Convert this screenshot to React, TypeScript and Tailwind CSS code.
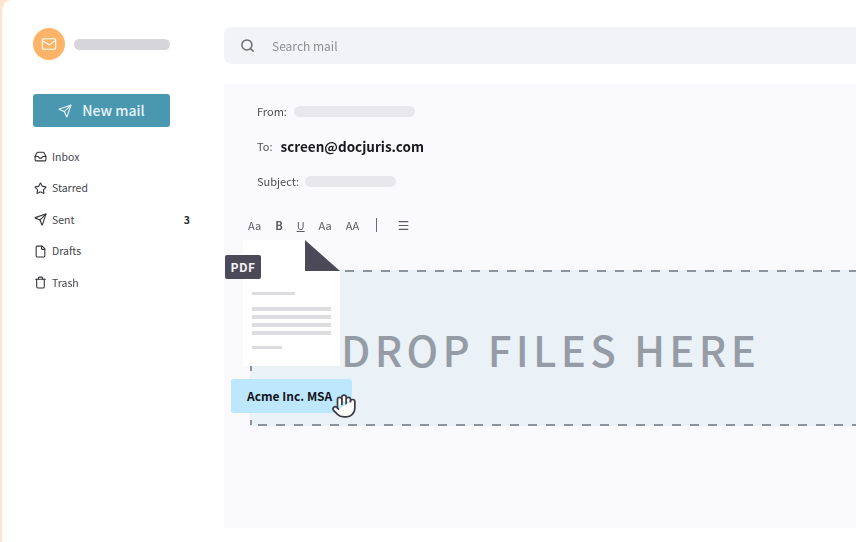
import { File, Hand, Inbox, Mail, Menu, Search, Send, Star, Trash } from "lucide-react";

const navItems = [
  { label: "Inbox", icon: Inbox },
  { label: "Starred", icon: Star },
  { label: "Sent", icon: Send, count: "3" },
  { label: "Drafts", icon: File },
  { label: "Trash", icon: Trash },
];

function Sidebar() {
  return (
    <aside className="w-[222px] shrink-0 pl-[31px] pt-[28px]">
      <div className="flex items-center gap-[9px]">
        <div className="flex h-[32px] w-[32px] items-center justify-center rounded-full bg-[#fdb468]">
          <Mail className="h-[16px] w-[16px] text-white" strokeWidth={1.6} />
        </div>
        <div className="h-[11px] w-[96px] rounded-full bg-[#d6d5da]" />
      </div>
      <button className="mt-[34px] flex h-[33px] w-[137px] items-center justify-center gap-[10px] rounded-[3px] bg-[#4a97b0] text-[14px] font-medium text-[#e6f3f7]">
        <Send className="h-[14px] w-[14px]" strokeWidth={2} />
        New mail
      </button>
      <nav className="mt-[14px] w-[157px]">
        {navItems.map((item) => (
          <div key={item.label} className="flex h-[31.5px] items-center text-[10.5px] text-[#44444c]">
            <item.icon className="ml-[1px] h-[13px] w-[13px] text-[#33333b]" strokeWidth={2} />
            <span className="ml-[5px]">{item.label}</span>
            {item.count && <span className="ml-auto font-bold text-[#2a2a30]">{item.count}</span>}
          </div>
        ))}
      </nav>
    </aside>
  );
}

function DocFile() {
  return (
    <svg className="absolute left-[243px] top-[240px]" width="98" height="127" viewBox="0 0 98 127">
      <path d="M0 0H62L97 31V126H0Z" fill="#ffffff" />
      <path d="M62 0L97 31H62Z" fill="#4c4a59" />
      <g fill="#dcdce1">
        <rect x="9" y="52" width="43" height="3" />
        <rect x="9" y="67" width="79" height="4" />
        <rect x="9" y="75" width="79" height="4" />
        <rect x="9" y="83" width="79" height="4" />
        <rect x="9" y="91" width="79" height="4" />
        <rect x="9" y="106" width="30" height="3" />
      </g>
    </svg>
  );
}

function DropZone() {
  return (
    <div className="relative ml-[26px] mt-[36px] flex h-[156px] items-center bg-[#eaf2f8]">
      <div className="absolute inset-x-0 top-0 h-[2px] bg-[repeating-linear-gradient(90deg,transparent_0_5px,#8d9199_5px_14px,transparent_14px_18px)]" />
      <div className="absolute inset-x-0 bottom-0 h-[2px] bg-[repeating-linear-gradient(90deg,transparent_0_8px,#8d9199_8px_17px,transparent_17px_18px)]" />
      <div className="absolute bottom-0 left-0 top-0 w-[2px] bg-[repeating-linear-gradient(180deg,transparent_0_6px,#8d9199_6px_11px,transparent_11px_18px)]" />
      <span className="ml-[91px] mt-[2px] text-[42px] font-medium leading-none tracking-[4.3px] text-[#969ca5]">DROP FILES HERE</span>
    </div>
  );
}

export default function App() {
  return (
    <div className="relative flex h-[542px] w-[856px] overflow-hidden bg-[#ffa864]/30 pl-[2px] font-['Noto_Sans_CJK_JP','Liberation_Sans',sans-serif] blur-[0.3px]">
      <div className="flex min-w-0 flex-1 rounded-tl-[10px] bg-white">
        <Sidebar />
        <main className="min-w-0 flex-1 pt-[27px]">
          <div className="flex h-[37px] items-center rounded-l-[8px] bg-[#f2f3f7] pl-[16px] text-[12px] text-[#8d8d96]">
            <Search className="h-[15px] w-[15px] text-[#6c6c74]" strokeWidth={2.4} />
            <span className="ml-[17px]">Search mail</span>
          </div>
          <section className="mt-[20px] h-[444px] bg-[#faf9fc] pt-[10px]">
            <div className="flex h-[35px] items-center pl-[33px] text-[11px] text-[#4d4d55]">
              From:
              <div className="ml-[7px] h-[11px] w-[121px] rounded-full bg-[#e8e8ec]" />
            </div>
            <div className="flex h-[35px] items-center pl-[33px] text-[11px] text-[#4d4d55]">
              To:
              <span className="ml-[8px] text-[13.5px] font-bold text-[#17171c]">screen@docjuris.com</span>
            </div>
            <div className="flex h-[35px] items-center pl-[33px] text-[11px] text-[#4d4d55]">
              Subject:
              <div className="ml-[6px] h-[11px] w-[91px] rounded-full bg-[#e8e8ec]" />
            </div>
            <div className="mt-[17px] flex h-[18px] items-center pl-[24px] text-[11px] text-[#5c5c64]">
              <span>Aa</span>
              <span className="ml-[14px] font-bold">B</span>
              <span className="ml-[14px] underline">U</span>
              <span className="ml-[14px]">Aa</span>
              <span className="ml-[14px]">AA</span>
              <div className="ml-[17px] h-[14px] w-px bg-[#6c6c74]" />
              <Menu className="ml-[20px] h-[13px] w-[13px]" strokeWidth={2.2} />
            </div>
            <DropZone />
          </section>
        </main>
      </div>
      <DocFile />
      <div className="absolute left-[225px] top-[255px] flex h-[24px] w-[36px] items-center justify-center rounded-[2px] bg-[#4c4a59] text-[12px] font-bold tracking-[0.5px] text-[#f3f3f6]">
        PDF
      </div>
      <div className="absolute left-[231px] top-[379px] flex h-[34px] w-[121px] items-center rounded-[3px] bg-[#bde7fc] pl-[16px] text-[12px] font-bold text-[#14141a]">
        Acme Inc. MSA
      </div>
      <Hand className="absolute left-[331px] top-[393px] h-[26px] w-[26px] fill-white text-[#3c3c44]" strokeWidth={1.6} />
    </div>
  );
}
